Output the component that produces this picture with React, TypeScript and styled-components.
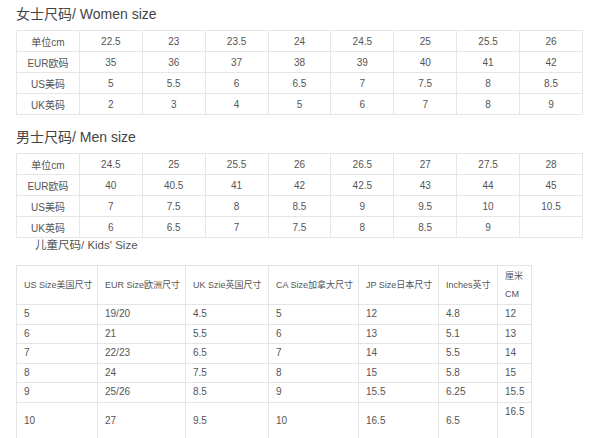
import React from 'react'
import styled, { createGlobalStyle } from 'styled-components'

const women = [
    ['单位cm', '22.5', '23', '23.5', '24', '24.5', '25', '25.5', '26'],
    ['EUR欧码', '35', '36', '37', '38', '39', '40', '41', '42'],
    ['US美码', '5', '5.5', '6', '6.5', '7', '7.5', '8', '8.5'],
    ['UK英码', '2', '3', '4', '5', '6', '7', '8', '9'],
]

const men = [
    ['单位cm', '24.5', '25', '25.5', '26', '26.5', '27', '27.5', '28'],
    ['EUR欧码', '40', '40.5', '41', '42', '42.5', '43', '44', '45'],
    ['US美码', '7', '7.5', '8', '8.5', '9', '9.5', '10', '10.5'],
    ['UK英码', '6', '6.5', '7', '7.5', '8', '8.5', '9', ''],
]

const kidsCols = [81, 88, 83, 90, 80, 59, 34]

const kidsRows = [
    ['5', '19/20', '4.5', '5', '12', '4.8', '12'],
    ['6', '21', '5.5', '6', '13', '5.1', '13'],
    ['7', '22/23', '6.5', '7', '14', '5.5', '14'],
    ['8', '24', '7.5', '8', '15', '5.8', '15'],
    ['9', '25/26', '8.5', '9', '15.5', '6.25', '15.5'],
]

export default function App() {
    return (
        <>
            <GlobalStyle />
            <Page>
                <Title>女士尺码/ Women size</Title>
                <SizeTable rows={women} />

                <Title $top={12}>男士尺码/ Men size</Title>
                <SizeTable rows={men} />

                <SubTitle>儿童尺码/ Kids' Size</SubTitle>
                <KidsTable>
                    <colgroup>
                        {kidsCols.map((w, i) => <col key={i} width={w} />)}
                    </colgroup>
                    <thead>
                        <tr>
                            <KidsHead>US Size美国尺寸</KidsHead>
                            <KidsHead>EUR Size欧洲尺寸</KidsHead>
                            <KidsHead>UK Szie英国尺寸</KidsHead>
                            <KidsHead>CA Size加拿大尺寸</KidsHead>
                            <KidsHead>JP Size日本尺寸</KidsHead>
                            <KidsHead>Inches英寸</KidsHead>
                            <KidsHead>厘米<br />CM</KidsHead>
                        </tr>
                    </thead>
                    <tbody>
                        {kidsRows.map((row, r) => (
                            <tr key={r}>
                                {row.map((cell, c) => <KidsCell key={c}>{cell}</KidsCell>)}
                            </tr>
                        ))}
                        <tr>
                            <KidsCell>10</KidsCell>
                            <KidsCell>27</KidsCell>
                            <KidsCell>9.5</KidsCell>
                            <KidsCell>10</KidsCell>
                            <KidsCell>16.5</KidsCell>
                            <KidsCell>6.5</KidsCell>
                            <KidsCell>16.5<br />&nbsp;</KidsCell>
                        </tr>
                    </tbody>
                </KidsTable>
                <BottomRule />
            </Page>
        </>
    )
}

function SizeTable({ rows }: { rows: string[][] }) {
    return (
        <Grid>
            <tbody>
                {rows.map((row, r) => (
                    <tr key={r}>
                        {row.map((cell, c) => <GridCell key={c}>{cell}</GridCell>)}
                    </tr>
                ))}
            </tbody>
        </Grid>
    )
}

const GlobalStyle = createGlobalStyle`
    html, body {
        margin: 0;
        padding: 0;
        background: #fff;
    }
    body {
        font-family: "Liberation Sans", Arial, "Noto Sans CJK SC", sans-serif;
        color: #555;
    }
`

const Page = styled.div`
    width: 600px;
    height: 438px;
    overflow: hidden;
    padding: 4px 0 0 16px;
    box-sizing: border-box;
`

const Title = styled.div<{ $top?: number }>`
    margin-top: ${p => p.$top ?? 0}px;
    font-size: 14px;
    line-height: 20px;
    height: 20px;
    color: #444;
`

const SubTitle = styled.div`
    margin: -1px 0 0 19px;
    font-size: 11.5px;
    line-height: 16px;
    height: 16px;
    color: #555;
`

const Grid = styled.table`
    margin-top: 6px;
    width: 567px;
    table-layout: fixed;
    border-collapse: collapse;
    border: 1px solid #e6e6e6;
`

const GridCell = styled.td`
    height: 20px;
    padding: 0;
    border: 1px solid #e6e6e6;
    text-align: center;
    vertical-align: middle;
    font-size: 10px;
    color: #555;
`

const KidsTable = styled.table`
    margin-top: 12px;
    width: 515px;
    table-layout: fixed;
    border-collapse: collapse;
    border: 1px solid #e5e5e5;
`

const KidsHead = styled.th`
    height: 38px;
    padding: 0 0 0 7px;
    border: 1px solid #e5e5e5;
    text-align: left;
    vertical-align: middle;
    font-weight: normal;
    font-size: 9px;
    line-height: 18px;
    color: #555;
    white-space: nowrap;
`

const KidsCell = styled.td`
    height: 18.5px;
    padding: 0 0 0 7px;
    border: 1px solid #e5e5e5;
    text-align: left;
    vertical-align: middle;
    font-size: 10px;
    line-height: 18px;
    color: #555;
`

const BottomRule = styled.div`
    margin-left: -3px;
    width: 573px;
    height: 3px;
    background: #cfcfcf;
`
